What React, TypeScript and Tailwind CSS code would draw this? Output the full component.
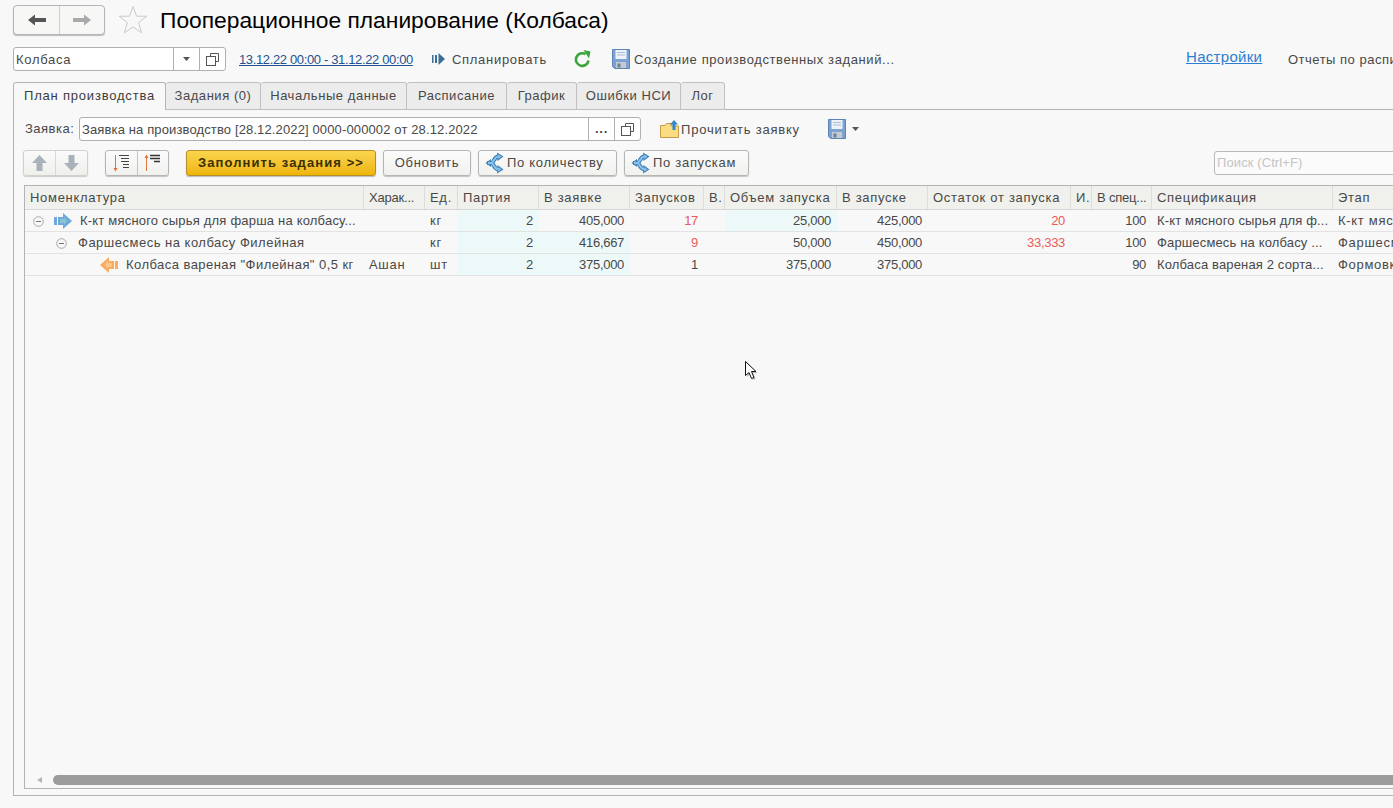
const gridCols =
  "grid w-[1507px] grid-cols-[339px_61px_33px_81px_91px_74px_21px_112px_91px_143px_21px_60px_181px_175px]";

const CopyIcon = () => (
  <svg width="13" height="13" viewBox="0 0 13 13" fill="none" stroke="#555" strokeWidth="1">
    <path d="M4.5 3.5V0.5H12.5V8.5H9.5" />
    <rect x="0.5" y="3.5" width="9" height="9" />
  </svg>
);

const Caret = () => (
  <svg width="7" height="4" viewBox="0 0 7 4">
    <path d="M0 0H7L3.5 4Z" fill="#555" />
  </svg>
);

const Floppy = () => (
  <svg width="18" height="20" viewBox="0 0 18 20">
    <path d="M0.5 0.5H17.5V19.5H2.5L0.5 17.5Z" fill="#7da2d2" stroke="#5c83b6" />
    <rect x="3.5" y="1" width="11" height="9" fill="#eef2f8" />
    <path d="M5 3.5H13M5 6H13" stroke="#a9bdd6" />
    <rect x="4" y="13" width="10" height="6" fill="#c3cad2" />
    <rect x="5.5" y="14.5" width="3" height="4" fill="#6f8096" />
  </svg>
);

const SplitIcon = () => (
  <svg width="20" height="22" viewBox="0 0 20 22" fill="none">
    <path d="M2 11H6C9 11 8.5 5.5 13 4.5M6 11C9 11 8.5 16.5 13 17.5" stroke="#3f80b8" strokeWidth="4" />
    <path d="M0.5 11L6 7V15Z M12 0.5L18.5 4.5L12.5 9Z M12 21.5L18.5 17.5L12.5 13Z" fill="#3f80b8" />
    <path d="M3 11H6C9 11 8.5 5.5 13 4.5M6 11C9 11 8.5 16.5 13 17.5" stroke="#8cc3ec" strokeWidth="2" />
    <path d="M2.5 11L5 9.2V12.8Z M13 2.5L16.5 4.5L13.3 7Z M13 19.5L16.5 17.5L13.3 15Z" fill="#8cc3ec" />
  </svg>
);

const Header = ({ title }: { title: string }) => (
  <div
    className={`flex items-center overflow-hidden whitespace-nowrap border-r border-[#dcdcd8] pl-[5px] ${
      title.endsWith("...") ? "tracking-[-0.2px]" : ""
    }`}
  >
    {title}
  </div>
);

type Cell = { text?: string; right?: boolean; red?: boolean; tint?: boolean; tight?: boolean };

const Row = ({ first, cells }: { first: React.ReactNode; cells: Cell[] }) => (
  <div className={`${gridCols} h-[22px] border-b border-[#e2e2e2]`}>
    <div className="flex items-center overflow-hidden whitespace-nowrap pt-[1px]">{first}</div>
    {cells.map((c, i) => (
      <div
        key={i}
        className={`flex items-center overflow-hidden whitespace-nowrap pl-[5px] pt-[1px] ${
          c.right ? "justify-end pr-[6px] tracking-[-0.3px]" : ""
        } ${c.red ? "text-[#ea5b5b]" : ""} ${c.tint ? "bg-[#edf9f9]" : ""} ${c.tight ? "tracking-[0.15px]" : ""}`}
      >
        {c.text}
      </div>
    ))}
  </div>
);

const Collapse = () => (
  <svg className="shrink-0" width="11" height="11" viewBox="0 0 11 11" fill="none">
    <circle cx="5.5" cy="5.5" r="4.8" stroke="#a8a8a8" />
    <path d="M3 5.5H8" stroke="#777" />
  </svg>
);

const headers = [
  "Номенклатура",
  "Харак...",
  "Ед.",
  "Партия",
  "В заявке",
  "Запусков",
  "В.",
  "Объем запуска",
  "В запуске",
  "Остаток от запуска",
  "И.",
  "В спец...",
  "Спецификация",
  "Этап",
];

const btn =
  "flex h-[26px] shrink-0 items-center rounded-[3px] border border-[#b5b5b5] bg-gradient-to-b from-[#fbfbfb] to-[#f1f1ee] shadow-[0_1px_1px_#c4c4c4]";

const tabs = [
  { label: "Задания (0)", w: "w-[95px]" },
  { label: "Начальные данные", w: "w-[146px]" },
  { label: "Расписание", w: "w-[100px]" },
  { label: "График", w: "w-[70px]" },
  { label: "Ошибки НСИ", w: "w-[104px]" },
  { label: "Лог", w: "w-[44px]" },
];

export default function App() {
  return (
    <div
      className="relative h-[808px] w-[1393px] overflow-hidden bg-[#f8f8f8] text-[13px] tracking-[0.7px] text-[#484848]"
      style={{ fontFamily: '"Liberation Sans", Arial, sans-serif' }}
    >
      {/* title row */}
      <div className="ml-[13px] flex h-[30px] translate-y-[5px] items-center">
        <div className="flex h-[30px] w-[92px] rounded-[4px] border border-[#b5b5b5] bg-[#f7f7f5] shadow-[0_1px_1px_#bbb]">
          <div className="flex w-[46px] items-center justify-center border-r border-[#d0d0d0]">
            <svg width="18" height="12" viewBox="0 0 18 12">
              <path d="M0 6L7 0.5V4H18V8H7V11.5Z" fill="#555" />
            </svg>
          </div>
          <div className="flex flex-1 items-center justify-center">
            <svg width="18" height="12" viewBox="0 0 18 12">
              <path d="M18 6L11 0.5V4H0V8H11V11.5Z" fill="#aaa" />
            </svg>
          </div>
        </div>
        <svg className="ml-[13px]" width="30" height="30" viewBox="0 0 30 30" fill="none">
          <path
            d="M15 1.5L18.6 11.2H28.9L20.6 17.6L23.6 27.8L15 21.8L6.4 27.8L9.4 17.6L1.1 11.2H11.4Z"
            stroke="#c9c9c9"
          />
        </svg>
        <div className="ml-[12px] text-[22.8px] leading-[30px] tracking-normal text-black">
          Пооперационное планирование (Колбаса)
        </div>
      </div>

      {/* toolbar */}
      <div className="ml-[13px] mt-[17px] flex h-[24px] w-[1500px] items-center whitespace-nowrap">
        <div className="flex h-[24px] w-[213px] shrink-0 rounded-[3px] border border-[#b0b0b0] bg-white">
          <div className="flex flex-1 items-center pl-[2px] pt-[1px]">Колбаса</div>
          <div className="flex w-[26px] items-center justify-center border-l border-[#b0b0b0]">
            <Caret />
          </div>
          <div className="flex w-[26px] items-center justify-center border-l border-[#b0b0b0]">
            <CopyIcon />
          </div>
        </div>
        <a className="ml-[13px] w-[174px] shrink-0 pt-[1px] tracking-[-0.36px] text-[#22528f] underline">
          13.12.22 00:00 - 31.12.22 00:00
        </a>
        <svg className="ml-[19px] shrink-0" width="13" height="12" viewBox="0 0 13 12">
          <path d="M0 2H1.5V10H0ZM3 2H5V10H3ZM6.5 0L13 6L6.5 12Z" fill="#3c6d98" />
        </svg>
        <span className="ml-[7px] w-[95px] shrink-0 pt-[1px]">Спланировать</span>
        <svg className="ml-[27px] shrink-0" width="17" height="18" viewBox="0 0 17 18" fill="none">
          <path d="M14.5 10.5A6.3 6.3 0 1 1 11.5 4.2" stroke="#3aa63a" strokeWidth="2.6" />
          <path d="M9.5 0L16.5 1.5L15 8.5Z" fill="#3aa63a" />
        </svg>
        <div className="ml-[21px] shrink-0">
          <Floppy />
        </div>
        <span className="ml-[4px] w-[261px] shrink-0 pt-[1px] tracking-[0.6px]">Создание производственных заданий...</span>
        <a className="ml-[291px] w-[76px] shrink-0 pb-[4px] text-[15px] tracking-[0.3px] text-[#2b7fd0] underline">Настройки</a>
        <span className="ml-[26px] shrink-0 pt-[1px] tracking-[0.5px]">Отчеты по расписанию</span>
      </div>

      {/* tabs */}
      <div className="ml-[13px] mt-[11px] flex h-[28px] items-end">
        <div className="z-10 flex h-[28px] w-[153px] items-center justify-center rounded-t-[3px] border border-b-0 border-[#b5b5b5] bg-[#f8f8f8] pb-[2px] tracking-[0.8px] text-[#3c3c3c]">
          План производства
        </div>
        {tabs.map((t) => (
          <div
            key={t.label}
            className={`flex h-[28px] ${t.w} items-center justify-center rounded-t-[3px] border border-l-0 border-[#c0c0c0] bg-[#ececec] pb-[1px] tracking-[0.55px]`}
          >
            {t.label}
          </div>
        ))}
      </div>

      {/* panel */}
      <div className="-mt-[1px] ml-[13px] flex h-[687px] w-[1500px] flex-col border-b border-l border-t border-[#b3b3b3] pl-[10px]">
        <div className="mt-[7px] flex h-[24px] items-center whitespace-nowrap">
          <span className="w-[55px] shrink-0 pl-[1px] tracking-[0.5px]">Заявка:</span>
          <div className="flex h-[24px] w-[562px] shrink-0 rounded-[3px] border border-[#b0b0b0] bg-white">
            <div className="flex flex-1 items-center pl-[2px] pt-[1px] tracking-[0.13px]">
              Заявка на производство [28.12.2022] 0000-000002 от 28.12.2022
            </div>
            <div className="flex w-[26px] items-center justify-center border-l border-[#b0b0b0] font-bold">...</div>
            <div className="flex w-[26px] items-center justify-center border-l border-[#b0b0b0]">
              <CopyIcon />
            </div>
          </div>
          <svg className="ml-[19px] shrink-0" width="19" height="18" viewBox="0 0 19 18">
            <path d="M0.5 5.5H5L6.5 3.5H11V6H18.5V17.5H0.5Z" fill="#fadc83" stroke="#c99a45" />
            <path d="M14 0L18 4.5H15.5V10H12.5V4.5H10Z" fill="#2f86c9" />
          </svg>
          <span className="ml-[2px] w-[121px] shrink-0 pt-[1px] tracking-[0.8px]">Прочитать заявку</span>
          <div className="ml-[26px] shrink-0">
            <Floppy />
          </div>
          <div className="ml-[6px] flex items-center">
            <Caret />
          </div>
        </div>

        <div className="mt-[9px] flex h-[26px] items-center whitespace-nowrap">
          <div className="-ml-[1px] flex h-[26px] w-[65px] shrink-0 rounded-[3px] border border-[#d0d0d0] bg-gradient-to-b from-[#fafafa] to-[#efefec] shadow-[0_1px_1px_#ccc]">
            <div className="flex flex-1 items-center justify-center border-r border-[#d8d8d8]">
              <svg width="15" height="16" viewBox="0 0 15 16">
                <path d="M7.5 0L15 8H10.5V16H4.5V8H0Z" fill="#a9b2b8" />
              </svg>
            </div>
            <div className="flex flex-1 items-center justify-center">
              <svg width="15" height="16" viewBox="0 0 15 16">
                <path d="M7.5 16L15 8H10.5V0H4.5V8H0Z" fill="#a9b2b8" />
              </svg>
            </div>
          </div>
          <div className={`${btn} ml-[17px] w-[64px]`}>
            <div className="flex h-full flex-1 items-center justify-center border-r border-[#c4c4c4]">
              <svg width="17" height="18" viewBox="0 0 17 18" fill="none">
                <path d="M2.5 1V16" stroke="#e2733a" />
                <path d="M0.5 14L2.5 17.5L4.5 14Z" fill="#e2733a" />
                <path d="M6 1.5H16M8 4.5H16M8 7.5H16M10 10.5H16M10 13.5H16" stroke="#444" />
              </svg>
            </div>
            <div className="flex h-full flex-1 items-center justify-center">
              <svg width="17" height="18" viewBox="0 0 17 18" fill="none">
                <path d="M2.5 2V17" stroke="#e2733a" />
                <path d="M0.5 4L2.5 0.5L4.5 4Z" fill="#e2733a" />
                <path d="M6 1.5H16M6 4.5H16M10 7.5H16" stroke="#333" strokeWidth="1.4" />
              </svg>
            </div>
          </div>
          <div className="ml-[17px] flex h-[26px] w-[190px] shrink-0 items-center justify-center rounded-[3px] border border-[#b48f2a] bg-gradient-to-b from-[#fad54d] to-[#efb500] font-bold tracking-[1.1px] text-[#3b3000] shadow-[0_1px_1px_#bbb]">
            Заполнить задания &gt;&gt;
          </div>
          <div className={`${btn} ml-[7px] w-[88px] justify-center`}>Обновить</div>
          <div className={`${btn} ml-[7px] w-[139px] pl-[6px]`}>
            <SplitIcon />
            <span className="ml-[2px]">По количеству</span>
          </div>
          <div className={`${btn} ml-[7px] w-[125px] pl-[6px]`}>
            <SplitIcon />
            <span className="ml-[2px]">По запускам</span>
          </div>
          <div className="ml-[465px] flex h-[24px] w-[300px] shrink-0 items-center rounded-[3px] border border-[#b8b8b8] bg-[#fbfbfb] pl-[2px] tracking-[0.1px] text-[#c4c4c4]">
            Поиск (Ctrl+F)
          </div>
        </div>

        {/* table */}
        <div className="mt-[9px] flex h-[604px] flex-col border border-r-0 border-[#b3b3b3]">
          <div className={`${gridCols} h-[24px] border-b border-[#d6d6d6] bg-[#f0f1ec]`}>
            {headers.map((h) => (
              <Header key={h} title={h} />
            ))}
          </div>
          <Row
            first={
              <>
                <span className="ml-[8px] flex shrink-0">
                  <Collapse />
                </span>
                <svg className="ml-[10px] shrink-0" width="18" height="16" viewBox="0 0 18 16">
                  <path d="M0 4H3V12H0ZM4 4H9V0L18 8L9 16V12H4Z" fill="#6fa8dc" />
                  <path d="M6 6H10V4L13 8L10 12V10H6Z" fill="#86c4cf" />
                </svg>
                <span className="ml-[8px] tracking-[0.2px]">К-кт мясного сырья для фарша на колбасу...</span>
              </>
            }
            cells={[
              {},
              { text: "кг" },
              { text: "2", right: true, tint: true },
              { text: "405,000", right: true },
              { text: "17", right: true, red: true },
              {},
              { text: "25,000", right: true, tint: true },
              { text: "425,000", right: true },
              { text: "20", right: true, red: true },
              {},
              { text: "100", right: true },
              { text: "К-кт мясного сырья для ф...", tight: true },
              { text: "К-кт мясного сырья" },
            ]}
          />
          <Row
            first={
              <>
                <span className="ml-[31px] flex shrink-0">
                  <Collapse />
                </span>
                <span className="ml-[11px] tracking-[0.5px]">Фаршесмесь на колбасу Филейная</span>
              </>
            }
            cells={[
              {},
              { text: "кг" },
              { text: "2", right: true, tint: true },
              { text: "416,667", right: true, tint: true },
              { text: "9", right: true, red: true },
              {},
              { text: "50,000", right: true },
              { text: "450,000", right: true },
              { text: "33,333", right: true, red: true },
              {},
              { text: "100", right: true },
              { text: "Фаршесмесь на колбасу ...", tight: true },
              { text: "Фаршесмесь" },
            ]}
          />
          <Row
            first={
              <>
                <svg className="ml-[75px] shrink-0" width="18" height="16" viewBox="0 0 18 16">
                  <path d="M18 4H15V12H18ZM14 4H9V0L0 8L9 16V12H14Z" fill="#f9ab5e" />
                  <path d="M12 6H8V4L5 8L8 12V10H12Z" fill="#fbc78e" />
                </svg>
                <span className="ml-[8px] tracking-[0.45px]">Колбаса вареная "Филейная" 0,5 кг</span>
              </>
            }
            cells={[
              { text: "Ашан" },
              { text: "шт" },
              { text: "2", right: true, tint: true },
              { text: "375,000", right: true, tint: true },
              { text: "1", right: true },
              {},
              { text: "375,000", right: true },
              { text: "375,000", right: true },
              {},
              {},
              { text: "90", right: true },
              { text: "Колбаса вареная 2 сорта...", tight: true },
              { text: "Формовка колбасы" },
            ]}
          />
          <div className="flex-1" />
          {/* scrollbar */}
          <div className="mb-[3px] flex h-[10px] items-center">
            <svg className="ml-[12px]" width="5" height="6" viewBox="0 0 5 6">
              <path d="M5 0V6L0 3Z" fill="#b5b5b5" />
            </svg>
            <div className="ml-[11px] h-[10px] flex-1 rounded-l-[5px] bg-[#9b9b9b]" />
          </div>
        </div>
      </div>

      {/* mouse pointer */}
      <svg className="absolute left-[744px] top-[360px]" width="16" height="22" viewBox="0 0 16 22">
        <path d="M3 3V17L6.5 14L9 20L11.5 19L9 13H13.5Z" fill="#888" opacity="0.5" />
        <path d="M1.5 1.5V15.5L5 12.5L7.5 18.5L10 17.5L7.5 11.5H12Z" fill="#fff" stroke="#111" />
      </svg>
    </div>
  );
}
